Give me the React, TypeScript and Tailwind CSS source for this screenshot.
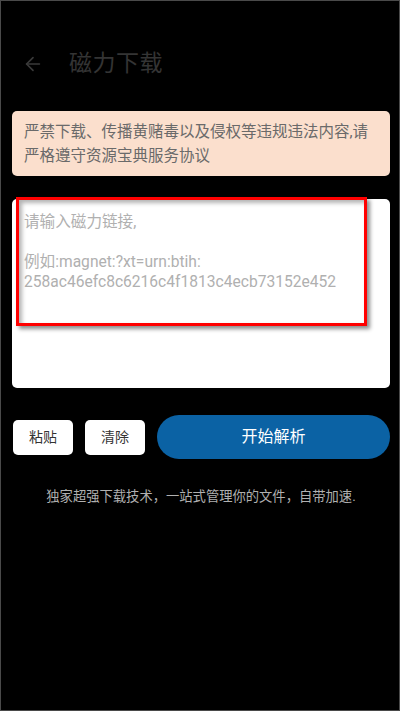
import { ArrowLeft } from "lucide-react";

const font = { fontFamily: 'Roboto, "Noto Sans CJK SC", sans-serif' };

export default function App() {
    return (
        <div
            className="w-[400px] h-[711px] bg-black border border-[#4a4a4a] flex flex-col pl-[11px] pr-[9px]"
            style={font}
        >
            <div className="mt-[46px] h-[34px] flex items-center pl-[10px]">
                <ArrowLeft className="w-[22px] h-[22px] text-[#3a3a3a]" strokeWidth={1.8} />
                <span className="ml-[25px] text-[23px] text-[#343434] tracking-[0.5px]">磁力下载</span>
            </div>

            <div className="mt-[30px] bg-[#fbdfcd] rounded-[5px] pl-[12px] pr-[8px] pt-[9px] pb-[8px] text-[15.5px] leading-[24px] text-[#6a6a6a]">
                严禁下载、传播黄赌毒以及侵权等违规违法内容,请严格遵守资源宝典服务协议
            </div>

            <div className="relative mt-[23px] h-[189px] bg-white rounded-[5px] pl-[12px] pt-[13px] text-[15.6px] leading-[20px] text-[#b0b0b0]">
                <p>请输入磁力链接,</p>
                <p>&nbsp;</p>
                <p>例如:magnet:?xt=urn:btih:</p>
                <p>258ac46efc8c6216c4f1813c4ecb73152e452</p>
                <div className="absolute left-[4px] -top-[2px] w-[351px] h-[129px] border-[3px] border-[#ff0000] shadow-[3px_3px_4px_rgba(0,0,0,0.45),inset_3px_3px_4px_rgba(0,0,0,0.3)]" />
            </div>

            <div className="mt-[27px] h-[44px] flex items-center gap-[12px] pl-[1px]">
                <button className="w-[60px] h-[35px] bg-white rounded-[5px] text-[14px] text-[#333]">粘贴</button>
                <button className="w-[60px] h-[35px] bg-white rounded-[5px] text-[14px] text-[#333]">清除</button>
                <button className="flex-1 h-[44px] bg-[#0b62a4] rounded-full text-[16px] text-white">开始解析</button>
            </div>

            <p className="mt-[28px] text-center text-[13.3px] leading-[20px] text-[#b0b0b0]">
                独家超强下载技术，一站式管理你的文件，自带加速.
            </p>
        </div>
    );
}
